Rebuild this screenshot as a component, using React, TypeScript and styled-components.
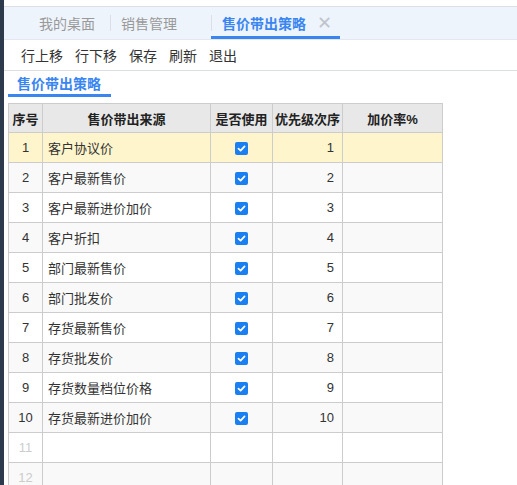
import React from "react";
import styled, { createGlobalStyle } from "styled-components";

const Global = createGlobalStyle`
  html, body { margin: 0; padding: 0; background: #fff; }
  body { font-family: "Liberation Sans", "Noto Sans CJK SC", sans-serif; color: #333; }
`;

const Page = styled.div`
  display: flex;
  height: 485px;
  overflow: hidden;
`;

const SideStrip = styled.div`
  width: 4px;
  flex: none;
  background: #2d3a4b;
`;

const Main = styled.div`
  flex: 1;
  display: flex;
  flex-direction: column;
  min-width: 0;
  & > * { flex: none; }
`;

const TopGap = styled.div`
  height: 6px;
  background: #fff;
`;

const TabBar = styled.div`
  height: 32px;
  display: flex;
  align-items: stretch;
  background: #eef4fc;
  border-top: 1px solid #dcdfe6;
  border-bottom: 1px solid #e4e7ed;
  padding-left: 25px;
`;

const Tab = styled.div<{ $w: number; $active?: boolean }>`
  width: ${(p) => p.$w}px;
  box-sizing: border-box;
  padding-left: 10px;
  display: flex;
  align-items: center;
  gap: 11px;
  position: relative;
  font-size: 14px;
  color: ${(p) => (p.$active ? "#3a86f0" : "#999")};
  font-weight: ${(p) => (p.$active ? 700 : 400)};
  &::after {
    content: "";
    display: ${(p) => (p.$active ? "block" : "none")};
    position: absolute;
    left: -1px;
    right: 0;
    bottom: 0;
    height: 3px;
    background: #3a86f0;
  }
`;

const TabDivider = styled.div`
  width: 1px;
  height: 16px;
  align-self: center;
  background: #dcdfe6;
`;

const CloseX = styled.span`
  font-size: 18px;
  font-weight: 400;
  color: #c0c4cc;
  line-height: 1;
`;

const Toolbar = styled.div`
  height: 30px;
  display: flex;
  align-items: center;
  gap: 12px;
  padding-left: 17px;
  border-bottom: 1px solid #dcdfe6;
`;

const ToolButton = styled.span`
  font-size: 14px;
  color: #333;
`;

const SubTabs = styled.div`
  height: 26px;
  display: flex;
  padding-left: 4px;
`;

const SubTab = styled.div`
  width: 103px;
  box-sizing: border-box;
  padding-left: 9px;
  font-size: 14px;
  font-weight: 700;
  color: #3a86f0;
  display: flex;
  align-items: center;
  border-bottom: 3px solid #3a86f0;
`;

const TableWrap = styled.div`
  padding: 6px 0 0 4px;
`;

const Grid = styled.table`
  border-collapse: collapse;
  table-layout: fixed;
  width: 435px;
  font-size: 13px;
`;

const Th = styled.th<{ $w: number }>`
  width: ${(p) => p.$w - 1}px;
  height: 28px;
  padding: 0;
  background: #e8e8e8;
  border: 1px solid #cccccc;
  font-weight: 700;
  color: #222;
  text-align: center;
  white-space: nowrap;
`;

const Row = styled.tr<{ $bg: string }>`
  background: ${(p) => p.$bg};
`;

const Td = styled.td<{ $align?: string; $muted?: boolean }>`
  height: 29px;
  padding: 0 8px 0 5px;
  border: 1px solid #cccccc;
  text-align: ${(p) => p.$align || "left"};
  color: ${(p) => (p.$muted ? "#cccccc" : "#333")};
  white-space: nowrap;
`;

const SeqTd = styled(Td)`
  padding: 0;
`;

const CheckTd = styled(Td)`
  padding: 0;
  text-align: center;
`;

const Check = styled.span`
  display: inline-flex;
  width: 13px;
  height: 13px;
  border-radius: 2px;
  background: #1a7ff0;
  align-items: center;
  justify-content: center;
  vertical-align: middle;
`;

const sources = [
  "客户协议价",
  "客户最新售价",
  "客户最新进价加价",
  "客户折扣",
  "部门最新售价",
  "部门批发价",
  "存货最新售价",
  "存货批发价",
  "存货数量档位价格",
  "存货最新进价加价",
];

function CheckMark() {
  return (
    <Check>
      <svg width="9" height="9" viewBox="0 0 10 10">
        <path d="M1.6 5.2 L4 7.4 L8.4 2.6" fill="none" stroke="#fff" strokeWidth="1.9" strokeLinecap="round" strokeLinejoin="round" />
      </svg>
    </Check>
  );
}

export default function App() {
  const rows = Array.from({ length: 12 }, (_, i) => i);
  return (
    <>
      <Global />
      <Page>
        <SideStrip />
        <Main>
          <TopGap />
          <TabBar>
            <Tab $w={81}>我的桌面</Tab>
            <TabDivider />
            <Tab $w={100}>销售管理</Tab>
            <TabDivider />
            <Tab $w={128} $active>
              售价带出策略
              <CloseX>✕</CloseX>
            </Tab>
          </TabBar>
          <Toolbar>
            <ToolButton>行上移</ToolButton>
            <ToolButton>行下移</ToolButton>
            <ToolButton>保存</ToolButton>
            <ToolButton>刷新</ToolButton>
            <ToolButton>退出</ToolButton>
          </Toolbar>
          <SubTabs>
            <SubTab>售价带出策略</SubTab>
          </SubTabs>
          <TableWrap>
            <Grid>
              <thead>
                <tr>
                  <Th $w={34}>序号</Th>
                  <Th $w={168}>售价带出来源</Th>
                  <Th $w={62}>是否使用</Th>
                  <Th $w={70}>优先级次序</Th>
                  <Th $w={100}>加价率%</Th>
                </tr>
              </thead>
              <tbody>
                {rows.map((i) => {
                  const filled = i < sources.length;
                  const bg = i === 0 ? "#fef5cc" : i % 2 === 1 ? "#f9f9f9" : "#ffffff";
                  return (
                    <Row key={i} $bg={bg}>
                      <SeqTd $align="center" $muted={!filled}>{i + 1}</SeqTd>
                      <Td>{filled ? sources[i] : ""}</Td>
                      <CheckTd>{filled ? <CheckMark /> : null}</CheckTd>
                      <Td $align="right">{filled ? i + 1 : ""}</Td>
                      <Td />
                    </Row>
                  );
                })}
              </tbody>
            </Grid>
          </TableWrap>
        </Main>
      </Page>
    </>
  );
}
